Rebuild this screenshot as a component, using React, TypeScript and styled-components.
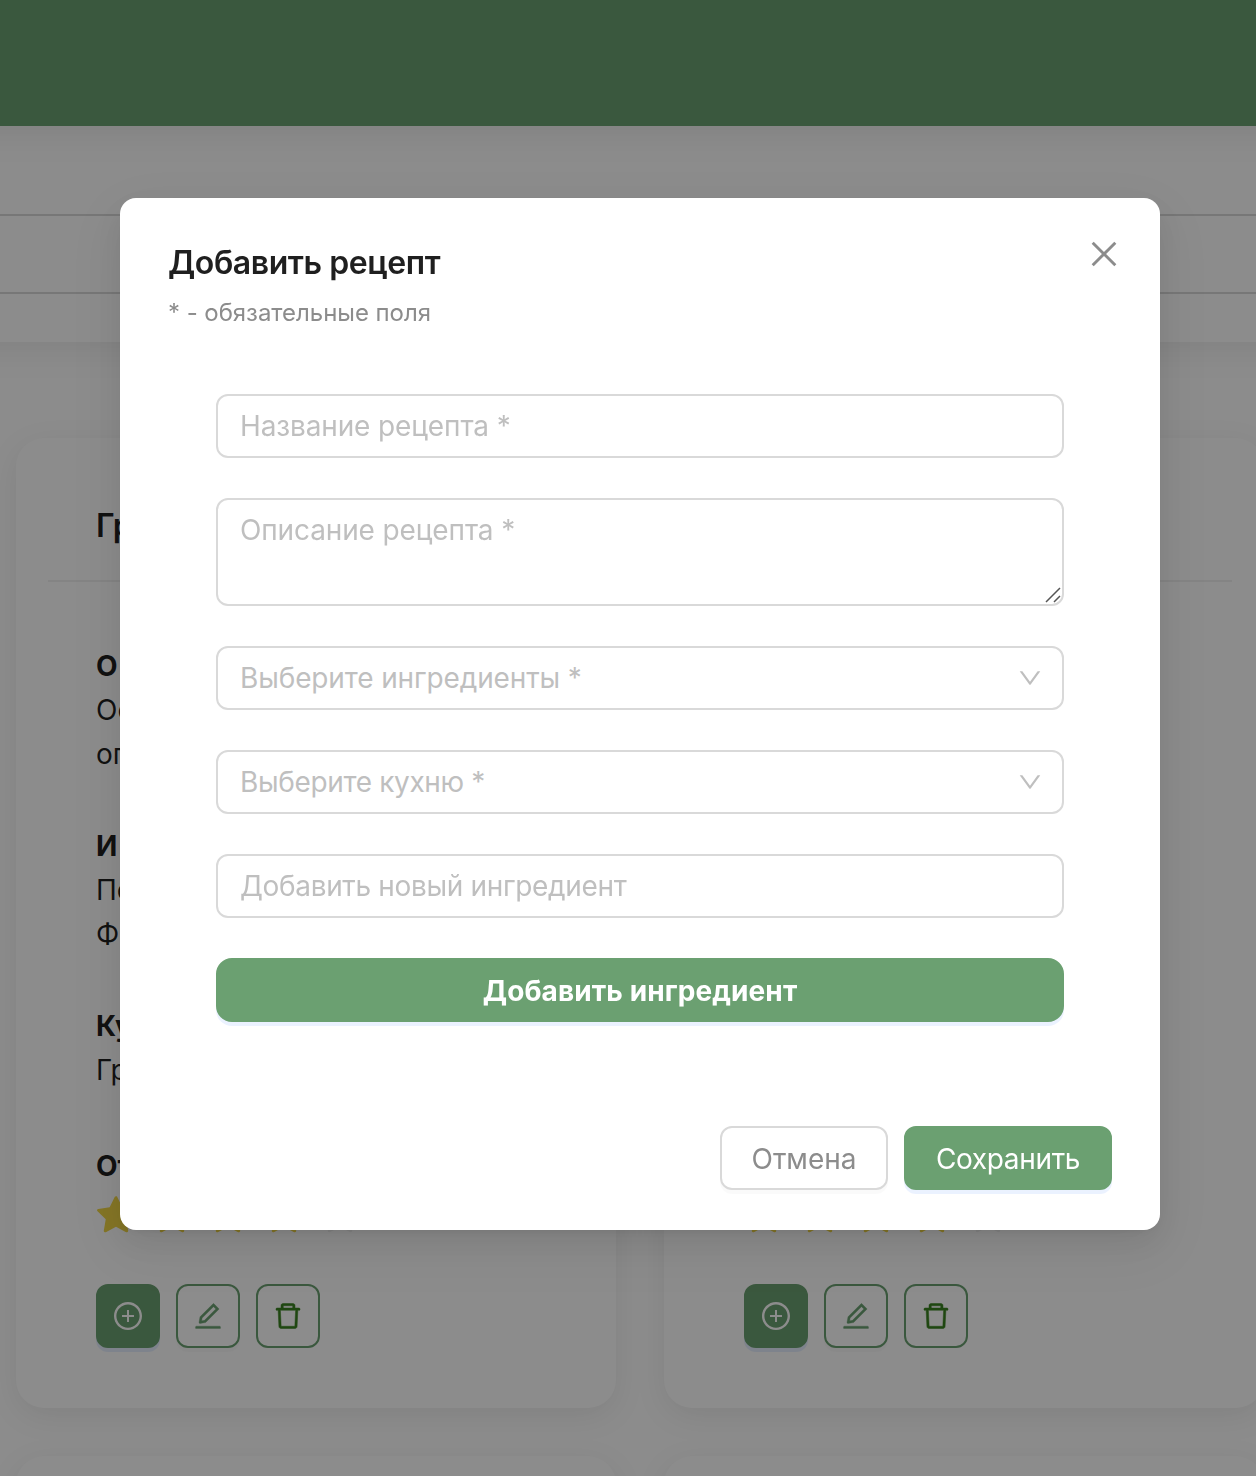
import React from "react";
import styled, { createGlobalStyle, css } from "styled-components";
import {
  AiFillStar,
  AiOutlineClose,
  AiOutlineDelete,
  AiOutlineDown,
  AiOutlineEdit,
  AiOutlinePlusCircle,
} from "react-icons/ai";

const GlobalStyle = createGlobalStyle`
  *, *::before, *::after { box-sizing: border-box; }
  body {
    margin: 0;
    background: #fff;
    font-family: Inter, "Noto Sans", sans-serif;
    font-size: 28px;
    line-height: 44px;
    color: rgba(0, 0, 0, 0.88);
  }
  button, input, textarea { font-family: inherit; }
`;

const antBox = "64 64 896 896";

const Page = styled.div`
  height: 1476px;
  overflow: hidden;
  background: #fff;
`;

const TopBar = styled.header`
  position: relative;
  height: 126px;
  margin: 0 -48px;
  background: #6ba071;
  box-shadow: 0 8px 32px rgba(0, 0, 0, 0.08);
`;

const FilterBar = styled.section`
  height: 216px;
  margin: 0 -48px;
  padding-top: 88px;
  background: #fff;
  box-shadow: 0 8px 32px rgba(0, 0, 0, 0.08);
`;

const FilterField = styled.div`
  height: 80px;
  border: 2px solid #d9d9d9;
  border-width: 2px 0;
`;

const CardGrid = styled.main`
  display: grid;
  grid-template-columns: 600px 600px;
  grid-auto-rows: 970px;
  gap: 48px;
  padding: 96px 16px 0;
`;

const Card = styled.article`
  display: flex;
  flex-direction: column;
  padding: 0 32px 60px;
  border-radius: 28px;
  background: #fff;
  box-shadow: 0 8px 32px rgba(0, 0, 0, 0.08);
`;

const CardHead = styled.div`
  flex: none;
  display: flex;
  align-items: center;
  height: 144px;
  padding: 34px 48px 0;
  border-bottom: 2px solid #f0f0f0;
  font-size: 32px;
  font-weight: 600;
`;

const CardBody = styled.div`
  flex: 1;
  display: flex;
  flex-direction: column;
  padding: 62px 48px 0;
`;

const Section = styled.section`
  margin-bottom: 48px;
`;

const Label = styled.div`
  font-weight: 700;
`;

const ReviewLabel = styled(Label)`
  margin-top: 4px;
`;

const Stars = styled.div`
  display: flex;
  gap: 16px;
  margin-top: auto;
  margin-bottom: 48px;
`;

const Star = styled(AiFillStar)<{ $on: boolean }>`
  width: 40px;
  height: 40px;
  color: ${(p) => (p.$on ? "#f1d645" : "rgba(0, 0, 0, 0.06)")};
`;

const Actions = styled.div`
  display: flex;
  gap: 16px;
`;

const IconButton = styled.button<{ $kind: "primary" | "edit" | "remove" }>`
  display: flex;
  align-items: center;
  justify-content: center;
  width: 64px;
  height: 64px;
  padding: 0;
  border: 2px solid #6ba071;
  border-radius: 12px;
  background: #fff;
  color: #6ba071;
  ${(p) =>
    p.$kind === "primary" &&
    css`
      background: #6ba071;
      color: #fff;
      box-shadow: 0 4px 0 rgba(5, 95, 255, 0.1);
    `}
  ${(p) =>
    p.$kind === "edit" &&
    css`
      box-shadow: 0 4px 0 rgba(0, 0, 0, 0.02);
      svg {
        stroke-width: 10;
      }
    `}
  ${(p) =>
    p.$kind === "remove" &&
    css`
      color: #3a8220;
      svg {
        stroke-width: 16;
      }
    `}
  svg {
    width: 28px;
    height: 28px;
    overflow: visible;
  }
`;

const Mask = styled.div`
  position: fixed;
  inset: 0;
  padding: 198px 0 0 120px;
  background: rgba(0, 0, 0, 0.45);
`;

const Dialog = styled.div`
  position: relative;
  display: flex;
  flex-direction: column;
  width: 1040px;
  height: 1032px;
  padding: 40px 48px;
  border-radius: 16px;
  background: #fff;
  box-shadow:
    0 12px 32px rgba(0, 0, 0, 0.08),
    0 6px 12px -8px rgba(0, 0, 0, 0.12),
    0 18px 56px 16px rgba(0, 0, 0, 0.05);
`;

const CloseButton = styled.button`
  position: absolute;
  top: 24px;
  right: 24px;
  display: flex;
  align-items: center;
  justify-content: center;
  width: 64px;
  height: 64px;
  padding: 0;
  border: 0;
  background: none;
  color: #8c8c8c;
  svg {
    width: 32px;
    height: 32px;
  }
`;

const Title = styled.h2`
  margin: 0;
  padding-top: 1px;
  font-size: 32px;
  font-weight: 600;
  line-height: 48px;
  letter-spacing: -0.43px;
`;

const Hint = styled.p`
  margin: 7px 0 0;
  font-size: 24px;
  line-height: 38px;
  letter-spacing: -0.05px;
  color: #8c8c8c;
`;

const Form = styled.form`
  display: flex;
  flex-direction: column;
  gap: 40px;
  padding: 62px 48px 0;
`;

const fieldBox = css<{ $tracking?: number }>`
  width: 100%;
  height: 64px;
  border: 2px solid #d9d9d9;
  border-radius: 12px;
  background: #fff;
  font-size: 28px;
  line-height: 44px;
  letter-spacing: ${(p) => p.$tracking ?? -0.13}px;
`;

const Input = styled.input<{ $tracking?: number }>`
  ${fieldBox}
  padding: 8px 22px;
  outline: none;
  &::placeholder {
    color: #bfbfbf;
    opacity: 1;
  }
`;

const AreaWrap = styled.div`
  position: relative;
  display: flex;
`;

const Area = styled.textarea`
  ${fieldBox}
  height: 108px;
  padding: 8px 22px;
  resize: none;
  outline: none;
  &::placeholder {
    color: #bfbfbf;
    opacity: 1;
  }
`;

const Grip = styled.svg`
  position: absolute;
  right: 3px;
  bottom: 3px;
  width: 16px;
  height: 16px;
`;

const Select = styled.div<{ $tracking?: number }>`
  ${fieldBox}
  display: flex;
  align-items: center;
  justify-content: space-between;
  padding: 0 20px 0 22px;
  color: #bfbfbf;
  svg {
    width: 24px;
    height: 24px;
  }
`;

const Button = styled.button<{ $primary?: boolean; $width?: number; $tracking?: number }>`
  width: ${(p) => (p.$width ? `${p.$width}px` : "100%")};
  height: 64px;
  padding: 2px 0 0;
  border: 2px solid ${(p) => (p.$primary ? "#6ba071" : "#d9d9d9")};
  border-radius: 12px;
  background: ${(p) => (p.$primary ? "#6ba071" : "#fff")};
  box-shadow: 0 4px 0 ${(p) => (p.$primary ? "rgba(5, 95, 255, 0.08)" : "rgba(0, 0, 0, 0.02)")};
  color: ${(p) => (p.$primary ? "#fff" : "#8c8c8c")};
  font-size: 28px;
  line-height: 44px;
  letter-spacing: ${(p) => p.$tracking ?? 0}px;
`;

const AddButton = styled(Button)`
  border-radius: 16px;
  font-weight: 700;
`;

const Footer = styled.footer`
  display: flex;
  justify-content: flex-end;
  gap: 16px;
  margin-top: auto;
`;

function CardTools() {
  return (
    <>
      <Stars>
        {[1, 2, 3, 4, 5].map((n) => (
          <Star key={n} $on={n < 5} viewBox={antBox} />
        ))}
      </Stars>
      <Actions>
        <IconButton $kind="primary">
          <AiOutlinePlusCircle viewBox={antBox} />
        </IconButton>
        <IconButton $kind="edit">
          <AiOutlineEdit viewBox={antBox} />
        </IconButton>
        <IconButton $kind="remove">
          <AiOutlineDelete viewBox={antBox} />
        </IconButton>
      </Actions>
    </>
  );
}

export default function App() {
  return (
    <>
      <GlobalStyle />
      <Page>
        <TopBar />
        <FilterBar>
          <FilterField />
        </FilterBar>
        <CardGrid>
          <Card>
            <CardHead>Гр</CardHead>
            <CardBody>
              <Section>
                <Label>О</Label>
                <div>Ос</div>
                <div>оп</div>
              </Section>
              <Section>
                <Label>И</Label>
                <div>По</div>
                <div>Ф</div>
              </Section>
              <Section>
                <Label>Ку</Label>
                <div>Гр</div>
              </Section>
              <ReviewLabel>От</ReviewLabel>
              <CardTools />
            </CardBody>
          </Card>
          <Card>
            <CardHead />
            <CardBody>
              <CardTools />
            </CardBody>
          </Card>
          <Card />
          <Card />
        </CardGrid>
      </Page>
      <Mask>
        <Dialog role="dialog">
          <CloseButton>
            <AiOutlineClose viewBox={antBox} />
          </CloseButton>
          <Title>Добавить рецепт</Title>
          <Hint>* - обязательные поля</Hint>
          <Form>
            <Input placeholder="Название рецепта *" />
            <AreaWrap>
              <Area placeholder="Описание рецепта *" />
              <Grip viewBox="0 0 16 16" stroke="#555" strokeWidth="1.5" fill="none">
                <path d="M1 15 15 1M9 15l6-6" />
              </Grip>
            </AreaWrap>
            <Select>
              <span>Выберите ингредиенты *</span>
              <AiOutlineDown viewBox={antBox} />
            </Select>
            <Select $tracking={-0.35}>
              <span>Выберите кухню *</span>
              <AiOutlineDown viewBox={antBox} />
            </Select>
            <Input $tracking={-0.34} placeholder="Добавить новый ингредиент" />
            <AddButton $primary $tracking={0.1} type="button">
              Добавить ингредиент
            </AddButton>
          </Form>
          <Footer>
            <Button $width={168}>Отмена</Button>
            <Button $primary $width={208} $tracking={-0.35}>
              Сохранить
            </Button>
          </Footer>
        </Dialog>
      </Mask>
    </>
  );
}
